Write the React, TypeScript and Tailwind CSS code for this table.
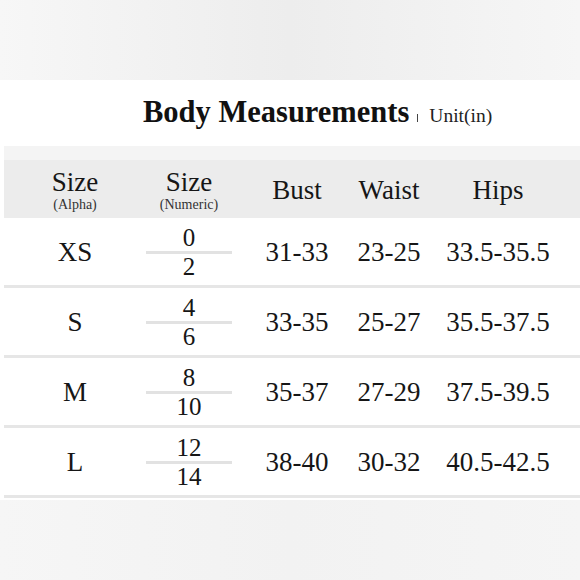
import React from "react";

const rows = [
  { a: "XS", n: ["0", "2"], bust: "31-33", waist: "23-25", hips: "33.5-35.5" },
  { a: "S", n: ["4", "6"], bust: "33-35", waist: "25-27", hips: "35.5-37.5" },
  { a: "M", n: ["8", "10"], bust: "35-37", waist: "27-29", hips: "37.5-39.5" },
  { a: "L", n: ["12", "14"], bust: "38-40", waist: "30-32", hips: "40.5-42.5" },
];

const cell = "flex justify-center whitespace-nowrap";

export default function App() {
  return (
    <div
      className="w-[580px] h-[580px] bg-white text-[#161616] flex flex-col overflow-hidden"
      style={{ fontFamily: '"Liberation Serif", "Times New Roman", serif' }}
    >
      <div className="h-[80px] shrink-0 bg-linear-to-r from-[#f7f7f7] via-[#ededed] to-[#f6f6f6]" />
      <div className="pt-[17px] pl-[143px] flex items-baseline h-[66px] shrink-0">
        <span className="text-[30.5px] leading-[30px] font-bold text-[#111]">Body Measurements</span>
        <span className="ml-[8px] mr-[11px] mb-[2px] w-[1px] h-[8px] bg-[#444] inline-block" />
        <span className="text-[19.5px] leading-[30px] text-[#222]">Unit(in)</span>
      </div>
      <div className="ml-[4px] bg-[#f4f4f4] pt-[14px]">
        <div className="bg-[#ececec] h-[58px] flex items-center">
          <div className="w-[142px] flex flex-col items-center pt-[1px]">
            <span className="text-[27px] leading-[30px]">Size</span>
            <span className="text-[14px] leading-[16px] text-[#333]">(Alpha)</span>
          </div>
          <div className="w-[86px] flex flex-col items-center pt-[1px]">
            <span className="text-[27px] leading-[30px]">Size</span>
            <span className="text-[14px] leading-[16px] text-[#333]">(Numeric)</span>
          </div>
          <div className="w-[30px]" />
          <div className={`w-[70px] ${cell} text-[27px] leading-[27px] pt-[2px]`}>Bust</div>
          <div className={`w-[114px] ${cell} text-[27px] leading-[27px] pt-[2px]`}>Waist</div>
          <div className={`w-[104px] ${cell} text-[27px] leading-[27px] pt-[2px]`}>Hips</div>
        </div>
      </div>
      <div className="ml-[4px] flex flex-col">
        {rows.map((r) => (
          <div
            key={r.a}
            className="h-[70px] border-b-[3px] border-[#e6e6e6] flex items-center pt-[2px]"
          >
            <div className={`w-[142px] ${cell} text-[27px] leading-[27px]`}>{r.a}</div>
            <div className="w-[86px] flex flex-col items-stretch">
              <div className="h-[26px] flex justify-center text-[25px] leading-[26px]">{r.n[0]}</div>
              <div className="h-[3px] bg-[#e2e2e2]" />
              <div className="h-[26px] flex justify-center text-[25px] leading-[26px]">{r.n[1]}</div>
            </div>
            <div className="w-[30px]" />
            <div className={`w-[70px] ${cell} text-[27px] leading-[27px]`}>{r.bust}</div>
            <div className={`w-[114px] ${cell} text-[27px] leading-[27px]`}>{r.waist}</div>
            <div className={`w-[104px] ${cell} text-[27px] leading-[27px]`}>{r.hips}</div>
          </div>
        ))}
      </div>
      <div className="flex-1 mt-[2px] bg-linear-to-r from-[#f6f6f6] via-[#f2f2f2] to-[#f5f5f5]" />
    </div>
  );
}
